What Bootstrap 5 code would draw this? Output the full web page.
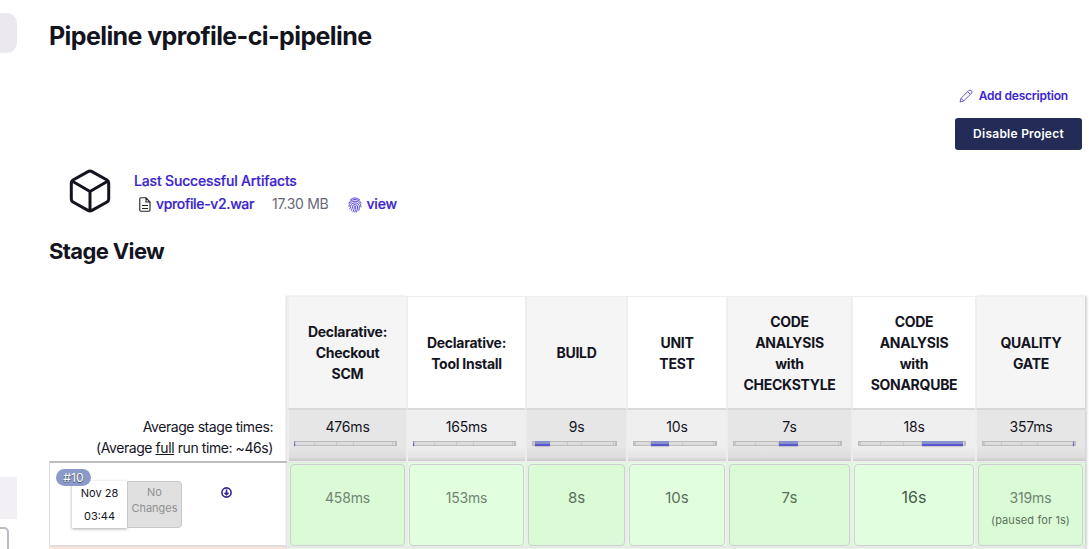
<!DOCTYPE html>
<html lang="en">
<head>
<meta charset="utf-8">
<meta name="viewport" content="width=device-width, initial-scale=1">
<title>vprofile-ci-pipeline</title>
<link href="https://cdn.jsdelivr.net/npm/bootstrap@5.3.0/dist/css/bootstrap.min.css" rel="stylesheet">
<style>
body{font-family:Inter,"Liberation Sans",sans-serif;font-size:14px;line-height:21px;color:#14141f;letter-spacing:-.17px;height:549px;overflow:hidden}
a{color:#3b24cd}
h1{font-size:25px;line-height:32px;letter-spacing:-.6px;margin:20px 0 35px}
h2{font-size:22px;line-height:28px;letter-spacing:-.63px;margin:21px 0 31px}
.side{width:49px;height:549px}
.side-top{width:17px;height:40px;margin-top:13px;border-radius:0 10px 10px 0;background:#ebe8ef}
.side-active{width:17px;height:42px;margin-top:424px;background:#f2eff6}
.side-box{width:9px;height:40px;margin-top:8px;border:2px solid #b9bdc9;border-left:0;border-radius:0 5px 5px 0}
.main{width:1040px}
.desc{font-size:12px;line-height:18px;letter-spacing:-.13px;margin-right:21px}
.desc span{margin-left:2px;font-weight:600;letter-spacing:-.2px}
.btn-disable{width:127px;height:32px;margin:13px 7px 0 0;background:#222c57;color:#fff;font-size:12px;font-weight:600;letter-spacing:.25px;border-radius:3px;line-height:18px}
.artifacts{margin:18px 0 0 20px;height:48px}
.artlinks{margin:2px 0 0 23px}
.artlinks a{font-weight:500;-webkit-text-stroke:.2px #3b24cd}
.files{height:25px;padding-left:5px}
.files svg{position:relative;top:1px}
.war{margin-left:5px;letter-spacing:-.35px}
.size{color:#68687a;margin:0 20px 0 18px;letter-spacing:-.3px}
.vw{margin-left:4px}
.stages{display:grid;grid-template-columns:238px 119px 119px 101px 100px 125px 124px 110px;width:1036px}
.hcell{height:114px;border:solid #efeff0;border-width:1px 0 0 2px;border-bottom:2px solid #d9d9d9;padding:0 12px;font-weight:700;letter-spacing:-.27px;background:#fff}
.hcell span{white-space:pre-line}
.acell{height:53px;border:solid #ededee;border-width:0 0 2px 2px;padding:6px 9px 0 5px;background:linear-gradient(#efefef 70%,#e5e5e5 92%,#cecece)}
.odd.hcell{background:#f5f5f5}
.odd.acell{background:linear-gradient(#e6e6e6 70%,#dedede 92%,#c8c8c8)}
.meter{height:5px;margin-top:4px;background:#dcdcdc;border:1px solid #bcbcbc;border-width:1px 2px 1px 1px}
.meter i{display:block;height:3px;border-right:1px solid #c6c6c6}
.meter i.on{height:5px;margin-top:-1px;background:linear-gradient(#8790cc 55%,#5d55ce 60%);border:0;box-shadow:0 1px 1px #aaa8}
.meter i:last-child{border:0}
.meter i.on:first-child{margin-left:-1px}
.meter i.on:nth-child(2){position:relative;left:-2px;min-width:1px}
.meter i.on:last-child{margin-right:-2px}
.gcell{height:83px;padding:1px 1px 1px 1px;border-left:2px solid #ececee;background:#e1ffdf}
.gcell>div{height:82px;border:1px solid #cfcfd3;border-radius:4px;color:#738373;padding-top:22px}
.odd.gcell{background:#dafbd6}
.gcell.edge{padding-right:2px}
.s15>div{font-size:15px;color:#5b6e5c;letter-spacing:0}
.s16>div{font-size:16px;color:#475948;letter-spacing:0}
.paused{font-size:11px;line-height:14px;letter-spacing:.1px;margin-top:5px;color:#5d715e}
.avg{padding:8px 14px 0 0;height:53px;margin-top:-2px;letter-spacing:-.42px}
.run{height:85px;margin-top:-2px;border:solid #ddd;border-width:2px 0 1px 1px;border-top-color:#bdbdc0;position:relative}
.tag{position:absolute;left:6px;top:6px;width:35px;height:17px;background:#8c9aca;color:#fff;border-radius:9px;font-size:12px;line-height:18px;letter-spacing:.2px;text-shadow:0 1px 1px #345;z-index:1}
.runinfo{padding:18px 0 0 22px;font-size:11px;letter-spacing:0}
.when{width:55px;height:47px;line-height:23px;padding-top:1px;box-shadow:0 1px 3px #aaa}
.nochg{width:55px;height:47px;line-height:16px;padding-top:2px;background:#e0e0e0;border:1px solid #c7c7c7;border-radius:0 4px 4px 0;color:#909090}
.dl{margin:6px 0 0 39px}
.next{height:6px;border-left:2px solid #ececee;border-top:2px solid #e7e9e7;background:#e4fbe1}
.next-left{height:6px;border-top:1px solid #e3dcda;background:#fce4de}
.edge{box-shadow:2px 0 2px #d4d4d8}
.lead-edge{box-shadow:-1px 0 2px #dadadf}
</style>
</head>
<body>
<div class="d-flex">
  <aside class="side flex-shrink-0"><div class="side-top"></div><div class="side-active"></div><div class="side-box"></div></aside>
  <main class="main flex-shrink-0">
    <h1 class="fw-bold">Pipeline vprofile-ci-pipeline</h1>
    <div class="d-flex flex-column align-items-end">
      <a href="#" class="desc d-flex align-items-center text-decoration-none"><svg width="14" height="14" viewBox="0 0 14 14" fill="none" stroke="#6557d2" stroke-width="1" stroke-linejoin="round" class="me-1"><path d="M1 13 2 9.3 10 1.3Q11 .6 12.3 1.7 13.4 3 12.7 4L4.700 12ZM8.700 2.700 11.300 5.300M2 9.300 4.700 12"/></svg><span>Add description</span></a>
      <button class="btn btn-disable p-0">Disable Project</button>
    </div>
    <section class="artifacts d-flex">
      <svg width="42" height="46" viewBox="0 0 42 46" fill="none" stroke="#14141f" stroke-width="3" stroke-linejoin="round" stroke-linecap="round"><path d="M19 3.600Q21 2.500 23 3.600L38 12Q39.700 13 39.700 15V31Q39.700 33 38 34L23 42.400Q21 43.500 19 42.400L4 34Q2.300 33 2.300 31V15Q2.300 13 4 12ZM3 13 21 23.500 39 13M21 24V42"/></svg>
      <div class="artlinks">
        <a href="#" class="d-block text-decoration-none">Last Successful Artifacts</a>
        <div class="d-flex align-items-center files">
          <svg width="12" height="15" viewBox="0 0 12 15" fill="none" stroke="#222" stroke-width="1.100"><path d="M2 .8H7L11 5V13Q11 14.200 10 14.200H2Q.8 14.200.8 13V2Q.8.8 2 .8ZM7 1V5H11M3 8.500H9M3 11.500H9"/></svg>
          <a href="#" class="text-decoration-none war">vprofile-v2.war</a>
          <span class="size">17.30 MB</span>
          <svg width="14" height="16" viewBox="0 0 14 16" fill="none" stroke="#5a4cdb" stroke-width="1" stroke-linecap="round"><path d="M2.500 2.500Q7-.9 11.500 2.500M.8 6Q2 2.500 7 2.400 12 2.500 13.200 6M1 9.500Q1 4.300 7 4.200 13 4.300 13 10M1.800 12Q2.500 11 2.700 9.500 2.600 6 7 5.900 11.300 6 11.300 10 11.300 12 10.800 13.500M3.300 13.500Q4.500 11.500 4.500 9.500 4.500 7.600 7 7.600 9.600 7.600 9.600 10 9.500 13 8.500 15M5 14.800Q6.300 12.500 6.200 9.500 7 8.700 7.800 9.500 8 12.500 6.900 15"/></svg>
          <a href="#" class="text-decoration-none vw">view</a>
        </div>
      </div>
    </section>
    <h2 class="fw-bold">Stage View</h2>
    <section class="stages text-center" id="stages"></section>
  </main>
</div>
<script>
const bounds = [0, 1, 1.8, 20.5, 42.5, 60, 99, 100];
const stages = [
  ['Declarative:\nCheckout\nSCM','476ms','458ms',''],
  ['Declarative:\nTool Install','165ms','153ms',''],
  ['BUILD','9s','8s','s15'],
  ['UNIT\nTEST','10s','10s','s15'],
  ['CODE\nANALYSIS\nwith\nCHECKSTYLE','7s','7s','s15'],
  ['CODE\nANALYSIS\nwith\nSONARQUBE','18s','16s','s16'],
  ['QUALITY\nGATE','357ms','319ms','']
];
const edge = i => (i % 2 ? '' : ' odd') + (i === 6 ? ' edge' : i === 0 ? ' lead-edge' : '');
const meter = n => bounds.slice(1).map((b, i) => `<i class="${i === n ? 'on' : ''}" style="width:${b - bounds[i]}%"></i>`).join('');
let html = '<div></div>';
stages.forEach((s, i) => html += `<div class="hcell d-flex align-items-center justify-content-center${edge(i)}"><span>${s[0]}</span></div>`);
html += '<div class="avg text-end">Average stage times:<br>(Average <u>full</u> run time: ~46s)</div>';
stages.forEach((s, i) => html += `<div class="acell${edge(i)}"><div class="ps-1">${s[1]}</div><div class="meter d-flex">${meter(i)}</div></div>`);
html += `<div class="run"><span class="tag">#10</span><div class="runinfo d-flex"><div class="when">Nov 28<br>03:44</div><div class="nochg">No<br>Changes</div><svg class="dl" width="11" height="11" viewBox="0 0 11 11" fill="none" stroke="#35258c" stroke-width="1.600"><circle cx="5.500" cy="5.500" r="4.600"/><path d="M5.500 2.500V7.500M3.500 5.700 5.500 7.700 7.500 5.700"/></svg></div></div>`;
stages.forEach((s, i) => html += `<div class="gcell ${s[3]}${edge(i)}"><div>${s[2]}${i === 6 ? '<div class="paused">(paused for 1s)</div>' : ''}</div></div>`);
html += '<div class="next-left"></div>' + stages.map((s, i) => `<div class="next${edge(i)}"></div>`).join('');
document.getElementById('stages').innerHTML = html;
</script>
<script src="https://cdn.jsdelivr.net/npm/bootstrap@5.3.0/dist/js/bootstrap.bundle.min.js"></script>
</body>
</html>
